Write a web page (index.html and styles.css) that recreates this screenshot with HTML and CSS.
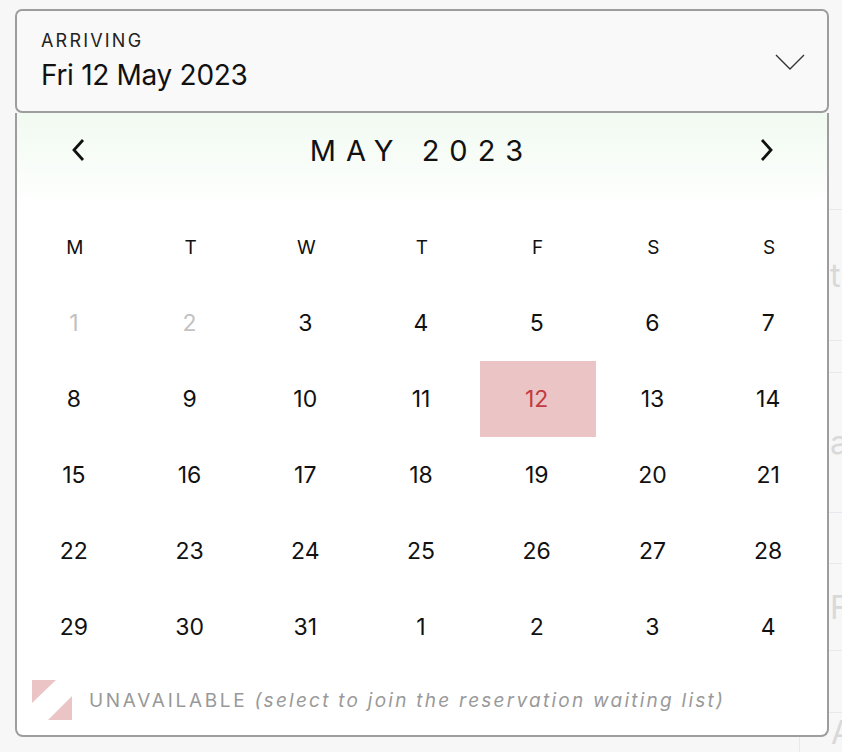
FILE: index.html
```html
<!DOCTYPE html>
<html>
<head>
    <meta charset="utf-8" />
    <title>Arriving</title>
    <link rel="stylesheet" href="styles.css">
</head>
<body>
    <div class="backdrop">
        <div class="row r0"></div>
        <div class="row r1"><span class="lbl">tay details</span></div>
        <div class="row r2"></div>
        <div class="row r3"><span class="lbl">ate</span></div>
        <div class="row r4"></div>
        <div class="row r5"><span class="lbl">First name</span></div>
        <div class="row r6"></div>
        <div class="row r7"><span class="lbl">Address</span></div>
    </div>

    <div class="picker">
        <div class="field">
            <div class="field-txt">
                <div class="label">ARRIVING</div>
                <div class="value">Fri 12 May 2023</div>
            </div>
            <svg class="chev" width="30" height="16" viewBox="0 0 30 16"><path d="M1 1 L15 15 L29 1" fill="none" stroke="#333" stroke-width="1.4" /></svg>
        </div>
        <div class="cal">
            <div class="cal-head">
                <span class="nav"><svg width="16" height="24" viewBox="0 0 16 24"><path d="M13 2 L4 12 L13 22" fill="none" stroke="#111" stroke-width="2.8" /></svg></span>
                <span class="month">MAY 2023</span>
                <span class="nav"><svg width="16" height="24" viewBox="0 0 16 24"><path d="M3 2 L12 12 L3 22" fill="none" stroke="#111" stroke-width="2.8" /></svg></span>
            </div>
            <div class="grid">
                <div class="wd">M</div><div class="wd">T</div><div class="wd">W</div><div class="wd">T</div><div class="wd">F</div><div class="wd">S</div><div class="wd">S</div>
                <div class="d past">1</div><div class="d past">2</div><div class="d">3</div><div class="d">4</div><div class="d">5</div><div class="d">6</div><div class="d">7</div>
                <div class="d">8</div><div class="d">9</div><div class="d">10</div><div class="d">11</div><div class="d sel">12</div><div class="d">13</div><div class="d">14</div>
                <div class="d">15</div><div class="d">16</div><div class="d">17</div><div class="d">18</div><div class="d">19</div><div class="d">20</div><div class="d">21</div>
                <div class="d">22</div><div class="d">23</div><div class="d">24</div><div class="d">25</div><div class="d">26</div><div class="d">27</div><div class="d">28</div>
                <div class="d">29</div><div class="d">30</div><div class="d">31</div><div class="d">1</div><div class="d">2</div><div class="d">3</div><div class="d">4</div>
            </div>
            <div class="legend">
                <svg class="swatch" width="40" height="40" viewBox="0 0 40 40"><polygon points="0,0 24,0 0,23" fill="#ebc5c6" /><polygon points="40,16 40,40 16,40" fill="#ebc5c6" /></svg>
                <span class="lg-main">UNAVAILABLE</span>
                <span class="lg-note">(select to join the reservation waiting list)</span>
            </div>
        </div>
    </div>
</body>
</html>
```

FILE: styles.css
```css
html, body { margin: 0; }
body { background: #f7f7f7; font-family: Inter, "Noto Sans", sans-serif; color: #111; width: 842px; height: 752px; overflow: hidden; position: relative; }

/* form sitting behind the popup */
.backdrop { position: absolute; left: 799px; top: 0; width: 43px; height: 752px; overflow: hidden; }
.backdrop .row { border-bottom: 1px solid #e9e9e9; box-sizing: border-box; display: flex; align-items: center; padding-left: 31px; }
.backdrop .lbl { color: #d9d9d9; font-size: 32px; white-space: nowrap; }
.r0 { height: 210px; }
.r1 { height: 131px; }
.r2 { height: 32px; }
.r3 { height: 140px; border-bottom-color: #e6e8f0 !important; }
.r4 { height: 51px; }
.r5 { height: 87px; }
.r6 { height: 62px; }
.r7 { height: 39px; border-bottom: none !important; border-left: 1px solid #e9e9e9; align-items: flex-end; padding-left: 30px; }

.picker { position: relative; z-index: 1; margin: 9px 0 0 15px; width: 814px; }

.field { height: 104px; box-sizing: border-box; border: 2px solid #9d9d9d; border-radius: 7px; background: #f9f9f9; display: flex; align-items: center; padding: 0 22px 0 24px; }
.field-txt { flex: 1; padding-bottom: 1px; }
.label { font-size: 18px; letter-spacing: 2.2px; line-height: 20px; color: #222; margin-top: 1px; }
.value { font-size: 28px; line-height: 34px; letter-spacing: -0.3px; margin-top: 7px; }
.chev { margin-top: 2px; }

.cal { border: 2px solid #9d9d9d; border-top: none; border-radius: 0 0 8px 8px; background: #fff; }
.cal-head { height: 96px; background: linear-gradient(#f1faf1, #fcfefc 80%, #fff); display: flex; justify-content: space-between; align-items: flex-start; padding: 22px 52px 0 53px; box-sizing: border-box; }
.nav { display: flex; padding-top: 3px; }
.month { font-size: 29px; letter-spacing: 10px; margin-right: 2px; line-height: 32px; }

.grid { display: grid; grid-template-columns: repeat(7, 1fr); grid-auto-rows: 76px; }
.wd, .d { display: flex; align-items: center; justify-content: center; }
.wd { font-size: 19px; }
.d { font-size: 23px; padding-right: 2px; }
.d.past { color: #c2c2c2; }
.d.sel { background: #ebc5c6; color: #c23a40; }

.legend { height: 70px; display: flex; align-items: center; padding-left: 15px; color: #999; font-size: 19px; }
.swatch { margin-right: 17px; }
.lg-main { letter-spacing: 2.7px; margin-right: 7px; }
.lg-note { font-style: italic; letter-spacing: 2.25px; }
```
